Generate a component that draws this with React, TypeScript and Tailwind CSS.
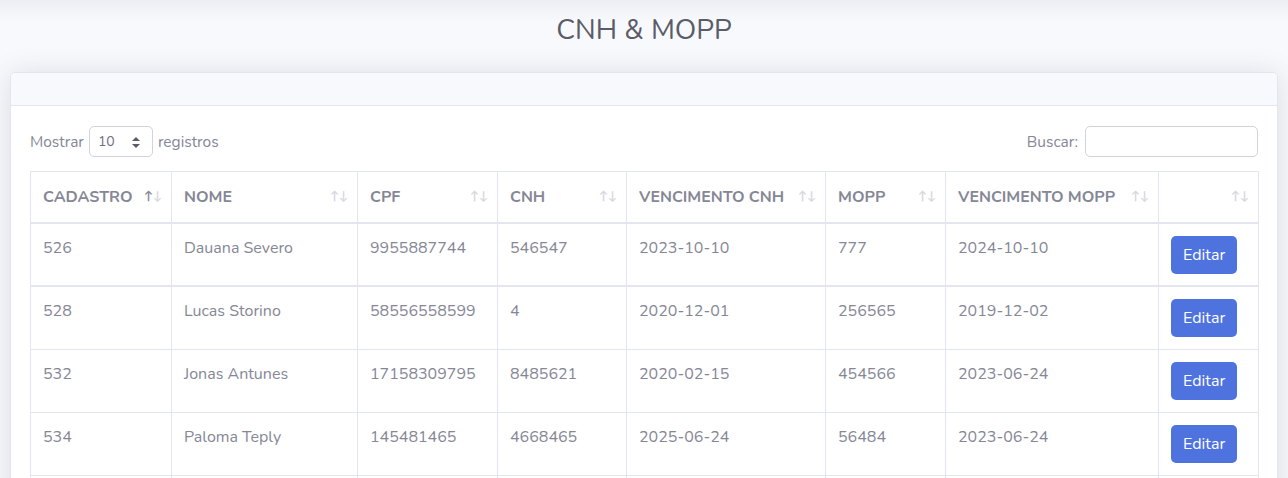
const rows = [
  { id: "526", nome: "Dauana Severo", cpf: "9955887744", cnh: "546547", venc: "2023-10-10", mopp: "777", vencMopp: "2024-10-10" },
  { id: "528", nome: "Lucas Storino", cpf: "58556558599", cnh: "4", venc: "2020-12-01", mopp: "256565", vencMopp: "2019-12-02" },
  { id: "532", nome: "Jonas Antunes", cpf: "17158309795", cnh: "8485621", venc: "2020-02-15", mopp: "454566", vencMopp: "2023-06-24" },
  { id: "534", nome: "Paloma Teply", cpf: "145481465", cnh: "4668465", venc: "2025-06-24", mopp: "56484", vencMopp: "2023-06-24" },
  { id: "535", nome: "Carlos Mendes", cpf: "12345678901", cnh: "7788990", venc: "2024-03-12", mopp: "8899", vencMopp: "2024-05-30" },
];

const columns = [
  { label: "Cadastro", w: "w-[141px]", active: true },
  { label: "Nome", w: "w-[186px]" },
  { label: "CPF", w: "w-[140px]" },
  { label: "CNH", w: "w-[129px]" },
  { label: "Vencimento CNH", w: "w-[199px]" },
  { label: "MOPP", w: "w-[120px]" },
  { label: "Vencimento MOPP", w: "w-[213px]" },
  { label: "", w: "w-[100px]" },
];

const App = () => {
  return (
    <div className="min-h-screen bg-[#f8f9fc] font-['Nunito','Lato',sans-serif] text-[#858796]">
      <div className="bg-gradient-to-b from-[#eceef3] to-[#f8f9fc] to-[30%] pt-[13px] pb-[25px]">
        <h1 className="text-center text-[28px] leading-[34px] font-normal text-[#5a5c69]">CNH &amp; MOPP</h1>
      </div>

      <div className="mx-[10px] bg-white rounded-[5px] border border-[#e3e6f0] shadow-[0_2px_28px_0_rgba(58,59,69,0.15)] overflow-hidden">
        <div className="h-[33px] bg-[#f8f9fc] border-b border-[#e3e6f0]"></div>

        <div className="px-[19px] py-5">
          <div className="flex items-center justify-between h-[31px] mb-[14px] text-[15.5px]">
            <label className="flex items-center">
              Mostrar
              <span className="relative ml-[5px] mr-[5px] w-[64px] h-[31px] border border-[#d1d3e2] rounded-[5px] flex items-center pl-2 text-[14px] text-[#6e707e]">
                10
                <svg className="absolute right-[12px] top-[10px]" width="8" height="11" viewBox="0 0 8 11">
                  <path d="M4 0 L8 4 L0 4 Z" fill="#5a5c69" />
                  <path d="M0 7 L8 7 L4 11 Z" fill="#5a5c69" />
                </svg>
              </span>
              registros
            </label>
            <label className="flex items-center gap-[7px]">
              Buscar:
              <span className="w-[173px] h-[31px] border border-[#d1d3e2] rounded-[5px] block"></span>
            </label>
          </div>

          <table className="w-full table-fixed border-collapse border border-[#e3e6f0] text-[16px] leading-6">
            <thead>
              <tr>
                {columns.map((c, i) => (
                  <th
                    key={i}
                    className={`${c.w} h-[51px] relative border border-[#e3e6f0] border-b-2 px-3 py-3 text-left font-bold uppercase text-[16px]`}
                  >
                    {c.label}
                    <span className={`absolute right-[18px] top-[12px] text-[12px] ${c.active ? "text-[#858796]" : "text-[#d6d7de]"}`}>↑</span>
                    <span className="absolute right-[9px] top-[12px] text-[12px] text-[#d6d7de]">↓</span>
                  </th>
                ))}
              </tr>
            </thead>
            <tbody>
              {rows.map((r, i) => (
                <tr key={r.id} className={i === 0 ? "border-b-2 border-[#e3e6f0]" : "border-b border-[#e3e6f0]"}>
                  <td className="border-x border-[#e3e6f0] px-3 pt-3 align-top">{r.id}</td>
                  <td className="border-x border-[#e3e6f0] px-3 pt-3 align-top">{r.nome}</td>
                  <td className="border-x border-[#e3e6f0] px-3 pt-3 align-top">{r.cpf}</td>
                  <td className="border-x border-[#e3e6f0] px-3 pt-3 align-top">{r.cnh}</td>
                  <td className="border-x border-[#e3e6f0] px-3 pt-3 align-top">{r.venc}</td>
                  <td className="border-x border-[#e3e6f0] px-3 pt-3 align-top">{r.mopp}</td>
                  <td className="border-x border-[#e3e6f0] px-3 pt-3 align-top">{r.vencMopp}</td>
                  <td className={`border-x border-[#e3e6f0] px-3 pt-3 align-top ${i === 0 ? "pb-[11px]" : "pb-3"}`}>
                    <button className="bg-[#4e73df] text-white rounded-[5px] px-3 py-[7px] leading-6">Editar</button>
                  </td>
                </tr>
              ))}
            </tbody>
          </table>
        </div>
      </div>
    </div>
  );
};

export default App;
